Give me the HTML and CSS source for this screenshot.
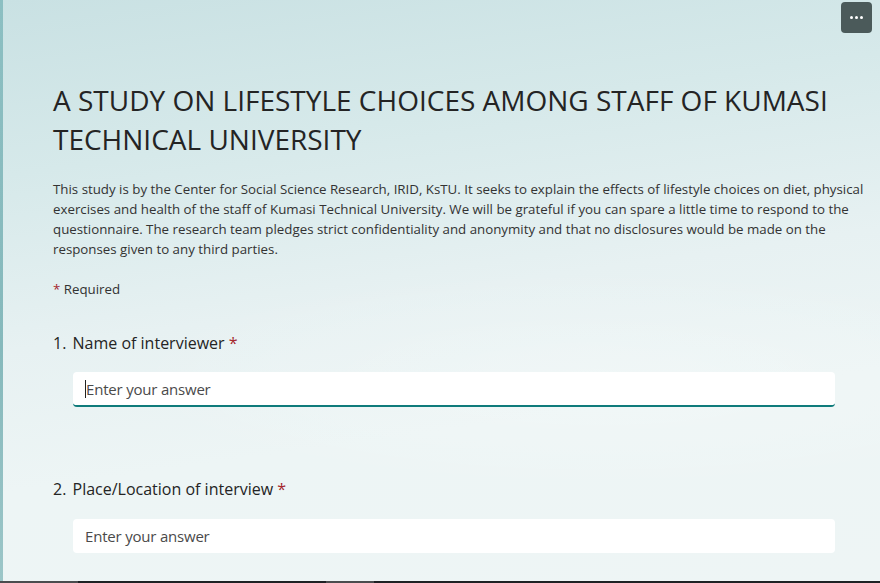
FILE: index.html
```html
<!DOCTYPE html>
<html>
<head>
<meta charset="utf-8">
<link rel="stylesheet" href="styles.css">
</head>
<body>
<div class="page">
  <div class="edge"></div>
  <main class="form">
    <h1 class="title">A STUDY ON LIFESTYLE CHOICES AMONG STAFF OF KUMASI TECHNICAL UNIVERSITY</h1>
    <p class="desc">This study is by the Center for Social Science Research, IRID, KsTU. It seeks to explain the effects of lifestyle choices on diet, physical exercises and health of the staff of Kumasi Technical University. We will be grateful if you can spare a little time to respond to the questionnaire. The research team pledges strict confidentiality and anonymity and that no disclosures would be made on the responses given to any third parties.</p>
    <div class="required"><span class="star">*</span> Required</div>
    <section class="question">
      <div class="qlabel"><span class="num">1.</span> Name of interviewer <span class="star">*</span></div>
      <div class="input focused"><span class="caret"></span>Enter your answer</div>
    </section>
    <section class="question q2">
      <div class="qlabel"><span class="num">2.</span> Place/Location of interview <span class="star">*</span></div>
      <div class="input">Enter your answer</div>
    </section>
  </main>
  <button class="more" aria-label="More options"><span></span><span></span><span></span></button>
</div>
<div class="taskbar"><span class="seg1"></span><span class="seg2"></span></div>
</body>
</html>
```
FILE: styles.css
```css
* { box-sizing: border-box; }
html, body { margin: 0; padding: 0; }
body {
  width: 880px;
  height: 583px;
  overflow: hidden;
  font-family: "Open Sans", "Noto Sans", sans-serif;
  color: #242424;
  display: flex;
  flex-direction: column;
}
.page {
  position: relative;
  flex: 1;
  display: flex;
  overflow: hidden;
  background:
    radial-gradient(ellipse 700px 160px at 600px 380px, rgba(255,255,255,0.25), rgba(255,255,255,0) 70%),
    linear-gradient(172deg, #c9e1e3 0%, #d6e9ea 25%, #e7f1f2 50%, #edf5f5 70%, #eef5f5 100%);
}
.edge {
  width: 3px;
  flex: none;
  background: linear-gradient(180deg, #8cbfc2 0%, #86b9bc 60%, #9cc6c8 100%);
}
.form {
  padding: 0 0 0 50px;
  width: 867px;
}
.title {
  margin: 81px 0 0;
  font-size: 28px;
  line-height: 39px;
  font-weight: 500;
  color: #242424;
  width: 800px;
}
.desc {
  margin: 20px 0 0;
  font-size: 13.3px;
  line-height: 20px;
  color: #333;
  width: 820px;
}
.required {
  margin-top: 20px;
  font-size: 13.3px;
  line-height: 20px;
  color: #333;
}
.star { color: #a4262c; }
.question { padding-right: 35px; }
.qlabel {
  margin-top: 32px;
  font-size: 16px;
  line-height: 24px;
  color: #242424;
}
.num { margin-right: 2px; }
.q2 .qlabel { margin-top: 70px; }
.input {
  margin: 18px 0 0 20px;
  height: 34px;
  background: #fff;
  border-radius: 4px;
  font-size: 15px;
  line-height: 34px;
  padding-left: 12px;
  color: #4a4a4a;
  letter-spacing: -0.2px;
  display: flex;
  align-items: center;
}
.input.focused {
  border-bottom: 2px solid #0f7b7b;
  height: 35px;
  margin-top: 17px;
}
.caret {
  width: 1px;
  height: 18px;
  background: #222;
}
.more {
  position: absolute;
  top: 2px;
  right: 8px;
  width: 31px;
  height: 31px;
  border: none;
  border-radius: 4px;
  background: #4b5a5a;
  display: flex;
  align-items: center;
  justify-content: center;
  gap: 2px;
  padding: 0;
}
.more span {
  width: 3px;
  height: 3px;
  border-radius: 50%;
  background: #fff;
}
.taskbar {
  height: 2px;
  flex: none;
  background: #1e2124;
  display: flex;
}
.seg1 { width: 78px; background: #4a4c4e; }
.seg2 { width: 48px; margin-left: 248px; background: #4a4c4e; }
```
